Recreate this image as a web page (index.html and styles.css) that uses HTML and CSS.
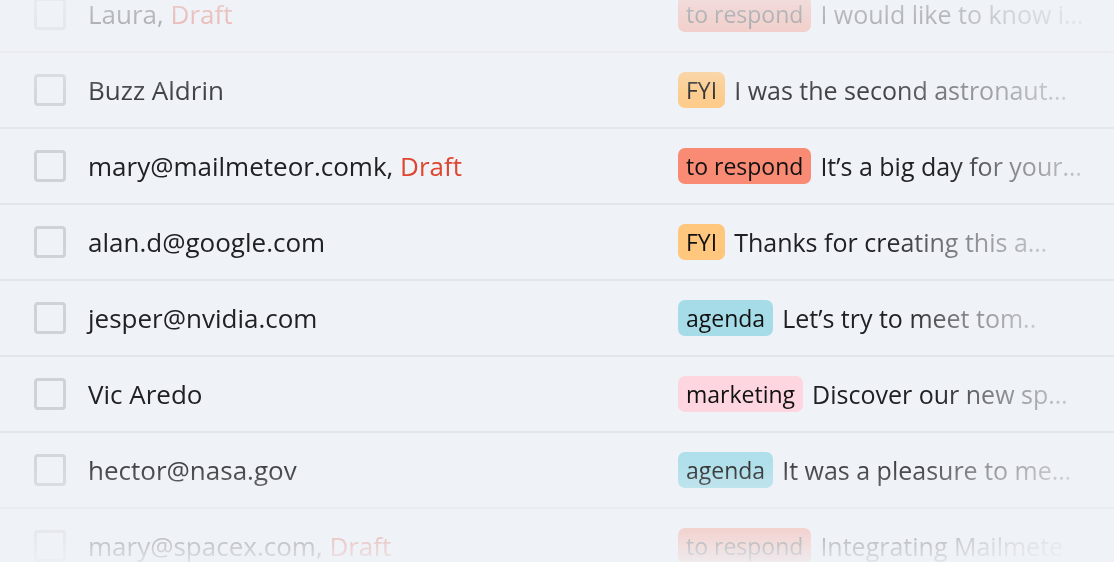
FILE: index.html
```html
<!DOCTYPE html>
<html lang="en">
<head>
<meta charset="utf-8">
<title>Inbox</title>
<link rel="stylesheet" href="styles.css">
</head>
<body>
<div class="viewport">
  <ul class="list">
    <li class="row">
      <span class="check"></span>
      <span class="from">Laura, <span class="draft">Draft</span></span>
      <span class="subject"><span class="tag tag-respond">to respond</span><span class="snippet">I would like to know i…</span></span>
    </li>
    <li class="row">
      <span class="check"></span>
      <span class="from">Buzz Aldrin</span>
      <span class="subject"><span class="tag tag-fyi">FYI</span><span class="snippet">I was the second astronaut…</span></span>
    </li>
    <li class="row">
      <span class="check"></span>
      <span class="from">mary@mailmeteor.comk, <span class="draft">Draft</span></span>
      <span class="subject"><span class="tag tag-respond">to respond</span><span class="snippet">It’s a big day for your…</span></span>
    </li>
    <li class="row">
      <span class="check"></span>
      <span class="from">alan.d@google.com</span>
      <span class="subject"><span class="tag tag-fyi">FYI</span><span class="snippet">Thanks for creating this a…</span></span>
    </li>
    <li class="row">
      <span class="check"></span>
      <span class="from">jesper@nvidia.com</span>
      <span class="subject"><span class="tag tag-agenda">agenda</span><span class="snippet">Let’s try to meet tom..</span></span>
    </li>
    <li class="row">
      <span class="check"></span>
      <span class="from">Vic Aredo</span>
      <span class="subject"><span class="tag tag-marketing">marketing</span><span class="snippet">Discover our new sp…</span></span>
    </li>
    <li class="row">
      <span class="check"></span>
      <span class="from">hector@nasa.gov</span>
      <span class="subject"><span class="tag tag-agenda">agenda</span><span class="snippet">It was a pleasure to me…</span></span>
    </li>
    <li class="row">
      <span class="check"></span>
      <span class="from">mary@spacex.com, <span class="draft">Draft</span></span>
      <span class="subject"><span class="tag tag-respond">to respond</span><span class="snippet">Integrating Mailmete</span></span>
    </li>
  </ul>
</div>
</body>
</html>
```

FILE: styles.css
```css
* { box-sizing: border-box; }

html, body {
  margin: 0;
  padding: 0;
  background: #eff2f7;
}

body {
  font-family: "Open Sans", "Noto Sans", sans-serif;
  color: #202124;
  overflow: hidden;
}

.viewport {
  height: 562px;
  overflow: hidden;
  -webkit-mask-image: linear-gradient(to bottom,
    rgba(0,0,0,.22) 0px,
    rgba(0,0,0,.4) 50px,
    rgba(0,0,0,.82) 90px,
    rgba(0,0,0,1) 135px,
    rgba(0,0,0,1) 430px,
    rgba(0,0,0,.82) 470px,
    rgba(0,0,0,.4) 515px,
    rgba(0,0,0,.08) 562px);
  mask-image: linear-gradient(to bottom,
    rgba(0,0,0,.22) 0px,
    rgba(0,0,0,.4) 50px,
    rgba(0,0,0,.82) 90px,
    rgba(0,0,0,1) 135px,
    rgba(0,0,0,1) 430px,
    rgba(0,0,0,.82) 470px,
    rgba(0,0,0,.4) 515px,
    rgba(0,0,0,.08) 562px);
}

.list {
  list-style: none;
  margin: -23px 0 0 0;
  padding: 0;
}

.row {
  display: flex;
  align-items: center;
  height: 76px;
  padding: 0 0 0 34px;
  border-bottom: 2px solid #e2e5ea;
}

.check {
  flex: none;
  width: 32px;
  height: 32px;
  border: 3px solid #cfd2d7;
  border-radius: 4px;
}

.from {
  flex: none;
  width: 590px;
  margin-left: 22px;
  font-size: 26px;
  white-space: nowrap;
}

.draft { color: #e0452f; }

.subject {
  display: flex;
  align-items: center;
  gap: 9px;
  width: 410px;
  white-space: nowrap;
}

.tag {
  flex: none;
  height: 36px;
  line-height: 36px;
  padding: 0 8px;
  border-radius: 7px;
  font-size: 23px;
  color: #111;
}

.tag-respond { background: #f98b74; }
.tag-fyi { background: #ffc67d; }
.tag-agenda { background: #a5dce8; }
.tag-marketing { background: #fdd6df; }

.snippet {
  font-size: 25px;
  -webkit-mask-image: linear-gradient(to right, #000 48%, rgba(0,0,0,.55) 70%, rgba(0,0,0,.18) 100%);
  mask-image: linear-gradient(to right, #000 48%, rgba(0,0,0,.55) 70%, rgba(0,0,0,.18) 100%);
}
```
